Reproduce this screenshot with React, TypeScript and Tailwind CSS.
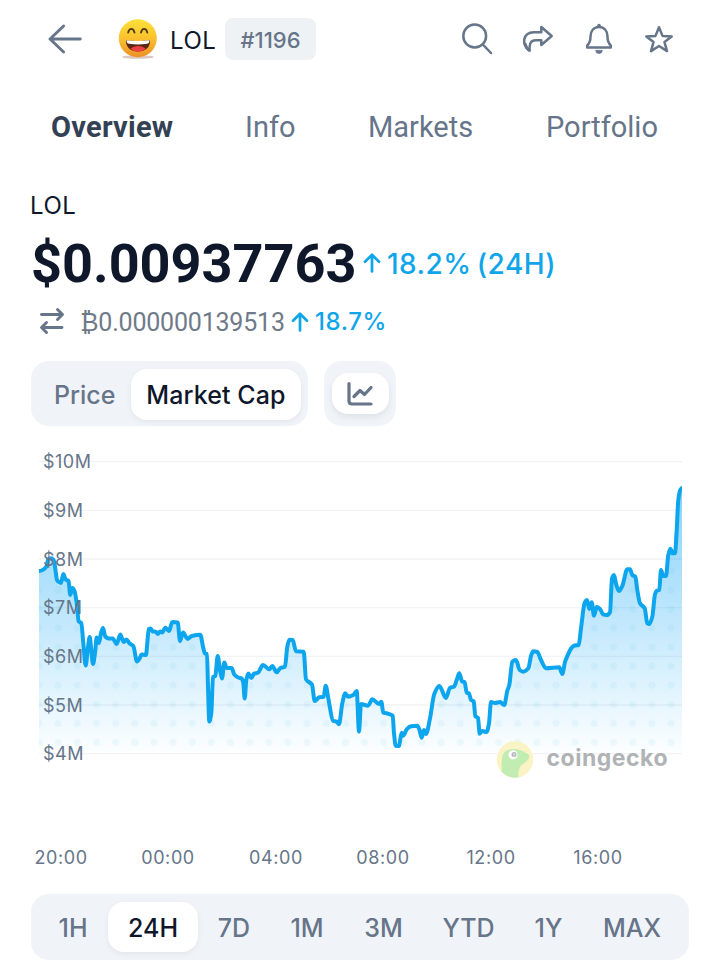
import React from "react";

const series: [number, number][] = [
  [39, 571], [42.7, 570], [46.7, 566], [48, 560], [51, 558.3], [53.7, 560], [55.7, 571.7], [57, 580], [59, 582], [61, 583],
  [63.3, 574], [65.7, 579.5], [68.5, 581], [70.3, 595], [72.3, 588], [74.5, 591], [76.7, 603], [78.7, 621.5], [81.3, 623],
  [83.3, 643], [85.7, 665.5], [87.7, 650], [89.7, 637], [91.3, 650], [93, 664], [95, 653], [96.7, 637.5], [99, 643],
  [101, 633], [103, 628], [105.3, 636.5], [108.7, 638.5], [112.7, 638.5], [116.7, 644], [120.3, 634.5], [123.7, 642],
  [126.3, 639.5], [129.7, 643.5], [133.3, 646], [137, 661.5], [139.3, 659], [141.7, 654.5], [146, 655], [147.3, 643],
  [148.7, 629], [150.7, 628.5], [152.7, 631.5], [155.7, 631.7], [157.7, 634], [160.3, 631.5], [162.3, 632.5], [165.3, 627.7],
  [169, 631], [172.3, 622], [177.7, 622.5], [180, 641], [183, 632.5], [187.7, 639], [191.7, 636], [200.3, 634.7],
  [203, 646.7], [205, 653.5], [207, 654], [208, 687], [209.3, 721.5], [211.3, 713], [213, 677], [215.3, 676], [217.7, 656],
  [220, 670], [222, 678.5], [224.3, 662.5], [226.7, 668], [231.7, 668], [234.3, 674.5], [238.3, 677.5], [241.7, 678.5],
  [243.3, 683], [244.7, 698.5], [246.3, 680], [248.3, 673.5], [251.3, 678], [254, 673.7], [258, 672.7], [263, 665],
  [269.3, 669.3], [272.3, 666], [276.7, 672.3], [280.3, 668], [285, 666.7], [287.3, 646.7], [289.3, 639.7], [292.7, 640],
  [296, 651.3], [303.7, 651.7], [306, 679.3], [312, 684.7], [314.7, 701], [319.3, 697.3], [323.7, 696.7], [325.7, 685.7],
  [328.3, 698.3], [333, 720.7], [336.7, 721.7], [339, 724.3], [342.3, 703.3], [345.3, 693.3], [348, 696.7], [353.3, 695],
  [356.7, 691], [359, 731.7], [361, 704], [368, 705.7], [372.3, 699.3], [379, 704], [381.3, 701.7], [383.3, 712.7],
  [386.7, 713.3], [392.7, 715.7], [394, 733.3], [395.7, 745.7], [399, 746], [399.9, 741.7], [401.7, 732.7], [403.3, 735.7],
  [406.7, 729.3], [411, 726.3], [417.3, 725.7], [419.3, 729.3], [421.7, 737.7], [424, 730], [426, 734], [430, 718.3],
  [434.3, 694], [439.3, 686], [446, 698], [450, 687.7], [454, 686.7], [456.7, 680], [459.3, 673.3], [462, 681.3],
  [464.7, 682.3], [466.7, 692.7], [469, 693.3], [471, 700], [473.7, 701.3], [475.3, 716], [478, 718], [479.7, 733.7],
  [482, 731], [486.7, 732], [489, 723.3], [491, 702], [495, 703], [500, 702], [504.3, 705], [507.3, 690.7], [509.3, 685],
  [512.3, 661.7], [516, 660], [519.7, 670], [523.3, 671.7], [528.3, 668.3], [531.3, 655], [533.3, 651.3], [537.3, 652],
  [541, 660], [546, 668.3], [559.3, 667.3], [562.3, 674], [565.3, 661], [574, 645.7], [578.7, 645], [581, 628.3],
  [584.7, 602.7], [587, 600], [589.3, 609], [591.7, 602.3], [594, 615.7], [596.7, 607], [600, 609], [603, 614.3],
  [606.7, 615], [610, 612.3], [612, 578.3], [614, 575], [616.3, 585], [619, 591], [622.3, 586], [627.3, 569.3],
  [630, 569.3], [632.3, 575], [635.3, 576.7], [637.3, 590], [640, 603.3], [644.7, 608.3], [647.3, 623.3], [649.3, 624],
  [652.3, 616.7], [655, 594.3], [656.7, 590.7], [659.3, 590], [661, 570], [663.3, 576], [666, 576], [668.3, 555],
  [670.3, 548.7], [672.7, 553.3], [675, 553.3], [676.7, 530], [678.3, 500], [680.3, 490], [682, 488],
];

// Harmonic-mean slopes keep peaks from overshooting
const smoothPath = (pts: [number, number][]) => {
  const slope = pts.map((p, i) => {
    if (i === 0 || i === pts.length - 1) return 0;
    const a = (p[1] - pts[i - 1][1]) / (p[0] - pts[i - 1][0]);
    const b = (pts[i + 1][1] - p[1]) / (pts[i + 1][0] - p[0]);
    return a * b <= 0 ? 0 : (2 * a * b) / (a + b);
  });
  let d = `M${pts[0][0]} ${pts[0][1]}`;
  for (let i = 1; i < pts.length; i++) {
    const [x0, y0] = pts[i - 1];
    const [x1, y1] = pts[i];
    const h = (x1 - x0) / 3;
    d += `C${x0 + h} ${y0 + slope[i - 1] * h} ${x1 - h} ${y1 - slope[i] * h} ${x1} ${y1}`;
  }
  return d;
};

const yTicks = ["$10M", "$9M", "$8M", "$7M", "$6M", "$5M", "$4M"];

const xTicks = [
  { label: "20:00", x: 61 },
  { label: "00:00", x: 168 },
  { label: "04:00", x: 276 },
  { label: "08:00", x: 383 },
  { label: "12:00", x: 491 },
  { label: "16:00", x: 598 },
];

const ranges = [
  { label: "1H", width: "w-[70px]" },
  { label: "24H", width: "w-[90px]" },
  { label: "7D", width: "w-[72px]" },
  { label: "1M", width: "w-[74px]" },
  { label: "3M", width: "w-[79px]" },
  { label: "YTD", width: "w-[91px]" },
  { label: "1Y", width: "w-[69px]" },
  { label: "MAX", width: "w-[98px]" },
];

const LaughEmoji: React.FC = () => (
  <svg width="42" height="42" viewBox="0 0 42 42">
    <defs>
      <linearGradient id="face" x1="0" y1="0" x2="0" y2="1">
        <stop offset="0" stopColor="#fbe03a" />
        <stop offset="0.45" stopColor="#fbc52f" />
        <stop offset="1" stopColor="#ed8f25" />
      </linearGradient>
      <linearGradient id="mouth" x1="0" y1="0" x2="0" y2="1">
        <stop offset="0" stopColor="#4a2413" />
        <stop offset="1" stopColor="#6b2a18" />
      </linearGradient>
    </defs>
    <ellipse cx="20" cy="39" rx="16" ry="1.8" fill="#a87461" opacity="0.4" />
    <circle cx="19.8" cy="20.3" r="19" fill="url(#face)" />
    <path d="M10.2 14.6c1-5 5.200-5 6.300 0M23 14.6c1-5 5.200-5 6.300 0" fill="none" stroke="#523b12" strokeWidth="1.900" strokeLinecap="round" />
    <path d="M8 22.300c8 1.100 16 1.100 24 0 .3 7-4.500 11.300-12 11.300s-12.300-4.600-12-11.300z" fill="url(#mouth)" />
    <path d="M12.600 30.800c4.300-3.600 10.700-3.600 15 0-4.300 3.800-10.700 3.800-15 0z" fill="#ec4141" />
    <path d="M8.500 22.200c7.700.9 15.300.9 23 0-.1 2.400-.8 3.300-2.600 3.600-5.900.8-11.900.8-17.800 0-1.800-.3-2.500-1.200-2.600-3.600z" fill="#fff" />
  </svg>
);

const UpArrow: React.FC<{ className?: string }> = ({ className }) => (
  <svg viewBox="0 0 18 20" fill="none" stroke="currentColor" strokeWidth="2.700" strokeLinecap="round" strokeLinejoin="round" className={className}>
    <path d="M9 18.500V1.800M2 8.800l7-7 7 7" />
  </svg>
);

const Header: React.FC = () => (
  <header className="flex h-[78px] items-center pl-[47px] pr-[28px] text-[#667589]">
    <svg width="36" height="32" viewBox="0 0 36 32" fill="none" stroke="currentColor" strokeWidth="2.900" strokeLinecap="round" strokeLinejoin="round">
      <path d="M33.300 16H3M16.600 3L3 16l13.600 13" />
    </svg>
    <div className="ml-[35px] h-[42px] w-[42px]">
      <LaughEmoji />
    </div>
    <span className="ml-[10px] mt-[3px] w-[55px] text-2xl tracking-[0.5px] text-[#0f172a]">LOL</span>
    <span className="flex h-[42px] w-[91px] items-center justify-center rounded-lg bg-[#eff2f5] pt-[3px] text-[22px] font-[450]">#1196</span>
    <div className="ml-auto flex items-center">
      <svg width="34" height="34" viewBox="0 0 34 34" fill="none" stroke="currentColor" strokeWidth="2.500" strokeLinecap="round">
        <circle cx="14.700" cy="14" r="11.400" />
        <path d="M22.800 22.500l8.200 8.500" />
      </svg>
      <svg width="34" height="34" viewBox="0 0 34 34" fill="none" stroke="currentColor" strokeWidth="2.500" strokeLinecap="round" strokeLinejoin="round" className="ml-[27px]">
        <path d="M20.300 5L30.700 14 20.300 23V18.200H14.500C10.500 18.200 8.200 20.500 8.600 28.500C4.500 26 2.600 21.500 3.200 17.800C4 12.800 8.100 10.300 13.100 10.300H20.300Z" />
        <path d="M4.200 22c.8 3.300 2 5 4 6.200" strokeWidth="3" />
      </svg>
      <svg width="34" height="34" viewBox="0 0 34 34" fill="none" stroke="currentColor" strokeWidth="2.500" strokeLinejoin="round" className="ml-[27px]">
        <path d="M5.200 25.500V23.500C8 21 8.500 19 8.500 14.500C8.500 8.700 12 4.900 17 4.900s8.500 3.800 8.500 9.600C25.500 19 26 21 28.800 23.500V25.500Z" />
        <path d="M13.700 28.300h6.600a3.300 3.300 0 0 1-6.600 0z" fill="currentColor" strokeWidth="0.600" />
        <circle cx="17" cy="3.500" r="1.800" fill="currentColor" stroke="none" />
      </svg>
      <svg width="34" height="34" viewBox="0 0 34 34" fill="none" stroke="currentColor" strokeWidth="2.500" strokeLinejoin="round" className="ml-[26px]">
        <path d="M17 5.200l3.500 8.700 9.200.5-7.200 5.700 2.500 9-8-5.100-8 5.100 2.500-9-7.200-5.700 9.200-.5z" />
      </svg>
    </div>
  </header>
);

const Tabs: React.FC = () => (
  <nav className="flex h-[98px] items-center pl-[51px] pt-[2px] font-['Roboto',sans-serif] text-[29px] text-[#667589]">
    <span className="w-[194px] font-bold tracking-[0.25px] text-[#334155]">Overview</span>
    <span className="w-[123px]">Info</span>
    <span className="w-[178px]">Markets</span>
    <span>Portfolio</span>
  </nav>
);

const PriceSummary: React.FC = () => (
  <section className="pl-[30px]">
    <div className="flex h-[58px] items-center pt-[2px] text-2xl tracking-[0.5px] text-[#0f172a]">LOL</div>
    <div className="flex h-[58px] items-center">
      <span className="w-[333px] pl-[1px] pt-[2px] font-['Roboto',sans-serif] text-[54px] font-bold leading-[58px] text-[#0f172a]">$0.00937763</span>
      <UpArrow className="h-[20px] w-[18px] text-[#0ea5e9]" />
      <span className="ml-[6px] pt-[2px] text-[28px] font-medium tracking-[0.45px] text-[#0ea5e9] [word-spacing:-2.500px]">18.2% (24H)</span>
    </div>
    <div className="flex h-[60px] items-center pl-[9px]">
      <svg width="26" height="28" viewBox="0 0 26 28" fill="none" stroke="#667589" strokeWidth="2.900" strokeLinecap="round" strokeLinejoin="round" className="-mt-[2px]">
        <path d="M2.500 7.500H23M18.500 2.500l5 5-5 5M23 20.500H3M7.500 15.500l-5 5 5 5" />
      </svg>
      <span className="ml-[15px] w-[211px] pt-[2px] font-['Roboto',sans-serif] text-[25px] tracking-[-0.2px] text-[#6f7a89]">₿0.000000139513</span>
      <UpArrow className="h-[20px] w-[18px] text-[#0ea5e9]" />
      <span className="ml-[6px] text-2xl font-medium tracking-[0.6px] text-[#0ea5e9]">18.7%</span>
    </div>
  </section>
);

const ChartToggles: React.FC = () => (
  <div className="mt-[9px] flex gap-4 pl-[31px] text-[25px]">
    <div className="flex h-[65px] w-[277px] items-center rounded-[18px] bg-[#f0f4f9] pl-[8px]">
      <span className="w-[92px] pl-[15px] pt-[4px] font-[450] text-[#667589]">Price</span>
      <span className="mt-[2px] flex h-[51px] w-[170px] items-center justify-center rounded-2xl bg-white pt-[2px] font-[450] tracking-[0.1px] text-[#0f172a] shadow-[0_2px_6px_rgba(15,23,42,0.06)]">
        Market Cap
      </span>
    </div>
    <div className="flex h-[65px] w-[72px] items-center justify-center rounded-[18px] bg-[#f0f4f9]">
      <span className="flex h-[41px] w-[57px] items-center justify-center rounded-2xl bg-white shadow-[0_3px_6px_rgba(15,23,42,0.08)]">
        <svg width="28" height="26" viewBox="0 0 28 26" fill="none" stroke="#667589" strokeWidth="3.200" strokeLinecap="round" strokeLinejoin="round">
          <path d="M3 2.500v17.500q0 3 3 3h19M8 15.500l6-6 4.500 4L25 6.500" />
        </svg>
      </span>
    </div>
  </div>
);

const Watermark: React.FC = () => (
  <g>
    <g opacity="0.95">
      <circle cx="515" cy="759.500" r="18.300" fill="#fbf3c3" />
      <path d="M501.500 771.500c.5-6-.5-12 1.500-17 2-4.500 7-6 12-5.500 4 .3 7 1.500 10 3.500 3.500 1 5 3 4 5.500-1.500 4-7 5.500-9 9-1.500 3-2 7-1.500 10.200-6.500 1.500-12.500-.8-17-5.700z" fill="#beedae" />
      <circle cx="513" cy="754.800" r="4.600" fill="#fff" />
      <circle cx="514" cy="754.500" r="2.500" fill="#aeb4b8" />
      <path d="M513 753.500l2 .8-1.500 1.700" fill="none" stroke="#eef1f2" strokeWidth="0.900" />
    </g>
    <text x="546.500" y="766" className="text-[23px] font-bold" fill="#b0b3b6" textLength="121" lengthAdjust="spacing">
      coingecko
    </text>
  </g>
);

const MarketCapChart: React.FC = () => {
  const line = smoothPath(series);
  return (
    <svg width="704" height="468" viewBox="0 426 704 468" className="block">
      <defs>
        <linearGradient id="area" x1="0" y1="488" x2="0" y2="753" gradientUnits="userSpaceOnUse">
          <stop offset="0" stopColor="#0ea5f5" stopOpacity="0.5" />
          <stop offset="1" stopColor="#0ea5f5" stopOpacity="0.01" />
        </linearGradient>
        <pattern id="dots" x="29.400" y="580.500" width="19.150" height="19.050" patternUnits="userSpaceOnUse">
          <circle cx="9.600" cy="9.500" r="3.600" fill="#0e9fd0" fillOpacity="0.06" />
        </pattern>
        <clipPath id="plot">
          <rect x="39" y="440" width="643" height="330" />
        </clipPath>
      </defs>
      {yTicks.map((tick, i) => (
        <path key={tick} d={`M39 ${461.7 + i * 48.66}H682`} stroke="#f1f3f6" strokeWidth="1.300" />
      ))}
      <g clipPath="url(#plot)">
        <path d={`${line}V753H39Z`} fill="url(#area)" />
        <path d={`${line}V753H39Z`} fill="url(#dots)" />
        <path d={line} fill="none" stroke="#0ca5ee" strokeWidth="4" strokeLinejoin="round" strokeLinecap="round" />
      </g>
      {yTicks.map((tick, i) => (
        <text key={tick} x="43" y={468.3 + i * 48.66} className="text-[18px] tracking-[0.5px]" fill="#667589">
          {tick}
        </text>
      ))}
      {xTicks.map((tick) => (
        <text key={tick.label} x={tick.x} y="864" textAnchor="middle" className="text-[18px] tracking-[0.6px]" fill="#667589">
          {tick.label}
        </text>
      ))}
      <Watermark />
    </svg>
  );
};

const RangePicker: React.FC = () => (
  <div className="ml-[31px] flex h-[66px] w-[658px] items-center rounded-[18px] bg-[#f0f4f9] pl-[7px] text-[25px] font-[450] text-[#667589]">
    {ranges.map((range) =>
      range.label === "24H" ? (
        <span key={range.label} className={`${range.width} flex h-[50px] items-center justify-center rounded-2xl bg-white pt-[3px] text-[#0f172a] shadow-[0_2px_6px_rgba(15,23,42,0.06)]`}>
          {range.label}
        </span>
      ) : (
        <span key={range.label} className={`${range.width} pt-[3px] text-center`}>
          {range.label}
        </span>
      )
    )}
  </div>
);

const App: React.FC = () => (
  <main className="h-[961px] w-[704px] overflow-hidden bg-white font-['Inter',sans-serif]">
    <Header />
    <Tabs />
    <PriceSummary />
    <ChartToggles />
    <MarketCapChart />
    <RangePicker />
  </main>
);

export default App;
